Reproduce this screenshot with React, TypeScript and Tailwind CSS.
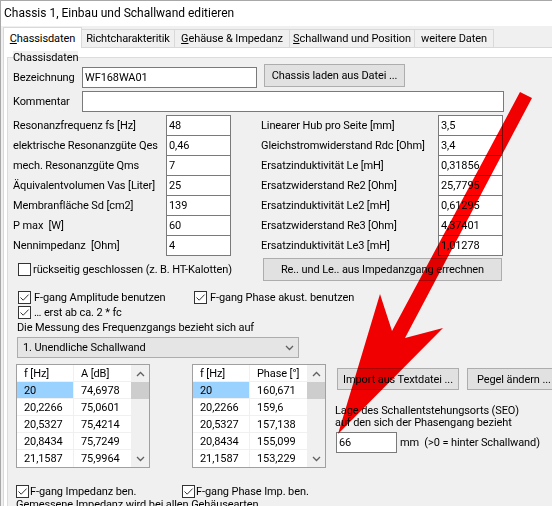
const leftRows = [
  ["Resonanzfrequenz fs [Hz]", "48"],
  ["elektrische Resonanzgüte Qes", "0,46"],
  ["mech. Resonanzgüte Qms", "7"],
  ["Äquivalentvolumen Vas [Liter]", "25"],
  ["Membranfläche Sd [cm2]", "139"],
  ["P max  [W]", "60"],
  ["Nennimpedanz  [Ohm]", "4"],
];

const rightRows = [
  ["Linearer Hub pro Seite [mm]", "3,5"],
  ["Gleichstromwiderstand Rdc [Ohm]", "3,4"],
  ["Ersatzinduktivität Le [mH]", "0,31856"],
  ["Ersatzwiderstand Re2 [Ohm]", "25,7795"],
  ["Ersatzinduktivität Le2 [mH]", "0,61295"],
  ["Ersatzwiderstand Re3 [Ohm]", "4,37401"],
  ["Ersatzinduktivität Le3 [mH]", "1,01278"],
];

const ampRows = [
  ["20", "74,6978"],
  ["20,2266", "75,0601"],
  ["20,5327", "75,4214"],
  ["20,8434", "75,7249"],
  ["21,1587", "75,9964"],
];

const phaseRows = [
  ["20", "160,671"],
  ["20,2266", "159,6"],
  ["20,5327", "157,138"],
  ["20,8434", "155,099"],
  ["21,1587", "153,229"],
];

function Check() {
  return (
    <span className="flex h-[13px] w-[13px] shrink-0 items-center justify-center border border-[#333333] bg-white">
      <svg width="11" height="11" viewBox="0 0 11 11">
        <path d="M1.5 5.5 L4.2 8.2 L9.6 2.6" fill="none" stroke="#333333" strokeWidth="1" />
      </svg>
    </span>
  );
}

function Box() {
  return <span className="h-[13px] w-[13px] shrink-0 border border-[#333333] bg-white" />;
}

function Chevron({ down }: { down?: boolean }) {
  return (
    <svg width="9" height="6" viewBox="0 0 9 6">
      <path d={down ? "M1 1 L4.5 4.5 L8 1" : "M1 5 L4.5 1.5 L8 5"} fill="none" stroke="#606060" strokeWidth="1.3" />
    </svg>
  );
}

function DataGrid({ head, rows }: { head: string[]; rows: string[][] }) {
  return (
    <div className="flex w-[134px] border border-[#a0a0a0] bg-white">
      <div className="flex flex-col">
        {[head, ...rows].map((r, i) => (
          <div key={i} className="flex h-[17px] border-b border-[#f0f0f0] last:border-b-0">
            <div
              className={
                "flex w-[57px] items-center border-r border-[#f0f0f0] pl-[7px] " + (i === 1 ? "bg-[#99d1ff]" : "")
              }
            >
              {r[0]}
            </div>
            <div className="flex w-[57px] items-center pl-[7px]">{r[1]}</div>
          </div>
        ))}
      </div>
      <div className="flex w-[18px] flex-col bg-[#f0f0f0]">
        <div className="flex h-[17px] items-center justify-center">
          <Chevron />
        </div>
        <div className="h-[17px] bg-[#cdcdcd]" />
        <div className="flex-1" />
        <div className="flex h-[17px] items-center justify-center">
          <Chevron down />
        </div>
      </div>
    </div>
  );
}

export default function App() {
  return (
    <div className="relative h-[506px] w-[552px] overflow-hidden border-l border-t border-[#a8a8a8] bg-white font-['Roboto',sans-serif] text-[11px] leading-[13px] tracking-[-0.1px] text-black">
      <div className="flex h-[25px] items-center pl-[3px] text-[12px] tracking-normal">
        Chassis 1, Einbau und Schallwand editieren
      </div>

      <div className="bg-[#f0f0f0]">
        <div className="flex h-[21px] items-end pl-[2px]">
          <div className="relative z-10 mb-[-1px] flex h-[21px] w-[79px] items-center justify-center border-x border-t border-[#d9d9d9] bg-white">
            <span>
              <span className="underline">C</span>hassisdaten
            </span>
          </div>
          <div className="flex h-[18px] w-[93px] items-center justify-center border-r border-t border-[#d9d9d9]">
            Richtcharakteritik
          </div>
          <div className="flex h-[18px] w-[115px] items-center justify-center border-r border-t border-[#d9d9d9]">
            <span>
              <span className="underline">G</span>ehäuse &amp; Impedanz
            </span>
          </div>
          <div className="flex h-[18px] w-[125px] items-center justify-center border-r border-t border-[#d9d9d9]">
            <span>
              <span className="underline">S</span>challwand und Position
            </span>
          </div>
          <div className="flex h-[18px] w-[79px] items-center justify-center border-r border-t border-[#d9d9d9]">
            weitere Daten
          </div>
        </div>

        <div className="ml-[2px] border-l border-t border-[#d9d9d9] bg-white pl-[3px] pt-[9px]">
          <div className="h-[460px] border-l border-t border-[#dcdcdc] bg-[#f0f0f0]">
            <div className="-mt-[7px] ml-[5px] w-fit bg-[#f0f0f0]">Chassisdaten</div>

            <div className="flex items-start pl-[5px]">
              <div className="mt-[3px] flex items-center">
                <div className="w-[69px]">Bezeichnung</div>
                <div className="flex h-[21px] w-[175px] items-center border border-[#7a7a7a] bg-white pl-[2px]">
                  WF168WA01
                </div>
              </div>
              <div className="ml-[7px] flex h-[23px] w-[141px] items-center justify-center border border-[#adadad] bg-[#e1e1e1]">
                Chassis laden aus Datei ...
              </div>
            </div>

            <div className="mt-[3px] flex items-center pl-[5px]">
              <div className="w-[69px]">Kommentar</div>
              <div className="h-[21px] w-[422px] border border-[#7a7a7a] bg-white" />
            </div>

            <div className="mt-[3px] flex flex-col pl-[5px]">
              {leftRows.map((l, i) => {
                const r = rightRows[i];
                const last = i === leftRows.length - 1;
                const cell =
                  "flex w-[65px] items-center border-x border-t border-[#7a7a7a] bg-white pl-[2px] " +
                  (last ? "h-[21px] border-b" : "h-[20px]");
                return (
                  <div key={i} className="flex h-[20px] items-start">
                    <div className="flex h-[20px] w-[153px] items-center whitespace-pre">{l[0]}</div>
                    <div className={cell}>{l[1]}</div>
                    <div className="w-[30px]" />
                    <div className="flex h-[20px] w-[177px] items-center">{r[0]}</div>
                    <div className={cell}>{r[1]}</div>
                  </div>
                );
              })}
            </div>

            <div className="mt-[3px] flex items-center pl-[10px]">
              <div className="flex w-[245px] items-center gap-[2px]">
                <Box />
                <span>rückseitig geschlossen (z. B. HT-Kalotten)</span>
              </div>
              <div className="flex h-[23px] w-[239px] items-center justify-center border border-[#adadad] bg-[#e1e1e1]">
                Re.. und Le.. aus Impedanzgang errechnen
              </div>
            </div>

            <div className="mt-[9px] flex h-[15px] items-center pl-[10px]">
              <div className="flex w-[176px] items-center gap-[3px]">
                <Check />
                <span>F-gang Amplitude benutzen</span>
              </div>
              <div className="flex items-center gap-[3px]">
                <Check />
                <span>F-gang Phase akust. benutzen</span>
              </div>
            </div>
            <div className="flex h-[15px] items-center gap-[3px] pl-[10px]">
              <Check />
              <span>… erst ab ca. 2 * fc</span>
            </div>
            <div className="flex h-[14px] items-center pl-[9px]">Die Messung des Frequenzgangs bezieht sich auf</div>
            <div className="ml-[9px] mt-[3px] flex h-[21px] w-[282px] items-center justify-between border border-[#adadad] bg-[#e5e5e5] pl-[5px] pr-[4px]">
              <span>1. Unendliche Schallwand</span>
              <Chevron down />
            </div>

            <div className="mt-[6px] flex items-start pl-[8px]">
              <DataGrid head={["f [Hz]", "A [dB]"]} rows={ampRows} />
              <div className="ml-[42px]">
                <DataGrid head={["f [Hz]", "Phase [°]"]} rows={phaseRows} />
              </div>
              <div className="ml-[9px] flex flex-col">
                <div className="ml-[2px] mt-[4px] flex gap-[8px]">
                  <div className="flex h-[22px] w-[122px] shrink-0 items-center justify-center border border-[#adadad] bg-[#e1e1e1]">
                    Import aus Textdatei ...
                  </div>
                  <div className="flex h-[22px] w-[100px] shrink-0 items-center whitespace-nowrap border border-[#adadad] bg-[#e1e1e1] pl-[9px]">
                    Pegel ändern ...
                  </div>
                </div>
                <div className="mt-[15px] leading-[12px]">
                  Lage des Schallentstehungsorts (SEO)
                  <br />
                  auf den sich der Phasengang bezieht
                </div>
                <div className="mt-[3px] flex items-center">
                  <div className="ml-px flex h-[21px] w-[61px] items-center border border-[#7a7a7a] bg-white pl-[2px]">
                    66
                  </div>
                  <span className="ml-[3px] whitespace-pre">mm  (&gt;0 = hinter Schallwand)</span>
                </div>
              </div>
            </div>

            <div className="mt-[16px] flex h-[14px] items-center pl-[8px]">
              <div className="flex w-[166px] items-center gap-px">
                <Check />
                <span>F-gang Impedanz ben.</span>
              </div>
              <div className="flex items-center gap-px">
                <Check />
                <span>F-gang Phase Imp. ben.</span>
              </div>
            </div>
            <div className="flex h-[13px] items-center pl-[8px]">Gemessene Impedanz wird bei allen Gehäusearten</div>
          </div>
        </div>
      </div>

      <svg
        className="pointer-events-none absolute left-0 top-0 mix-blend-multiply"
        width="552"
        height="506"
        viewBox="0 0 552 506"
      >
        <polygon points="519,91 531,97 404,337 442,327 337,433 379,293 391,330" fill="#ff0000" />
      </svg>
    </div>
  );
}
